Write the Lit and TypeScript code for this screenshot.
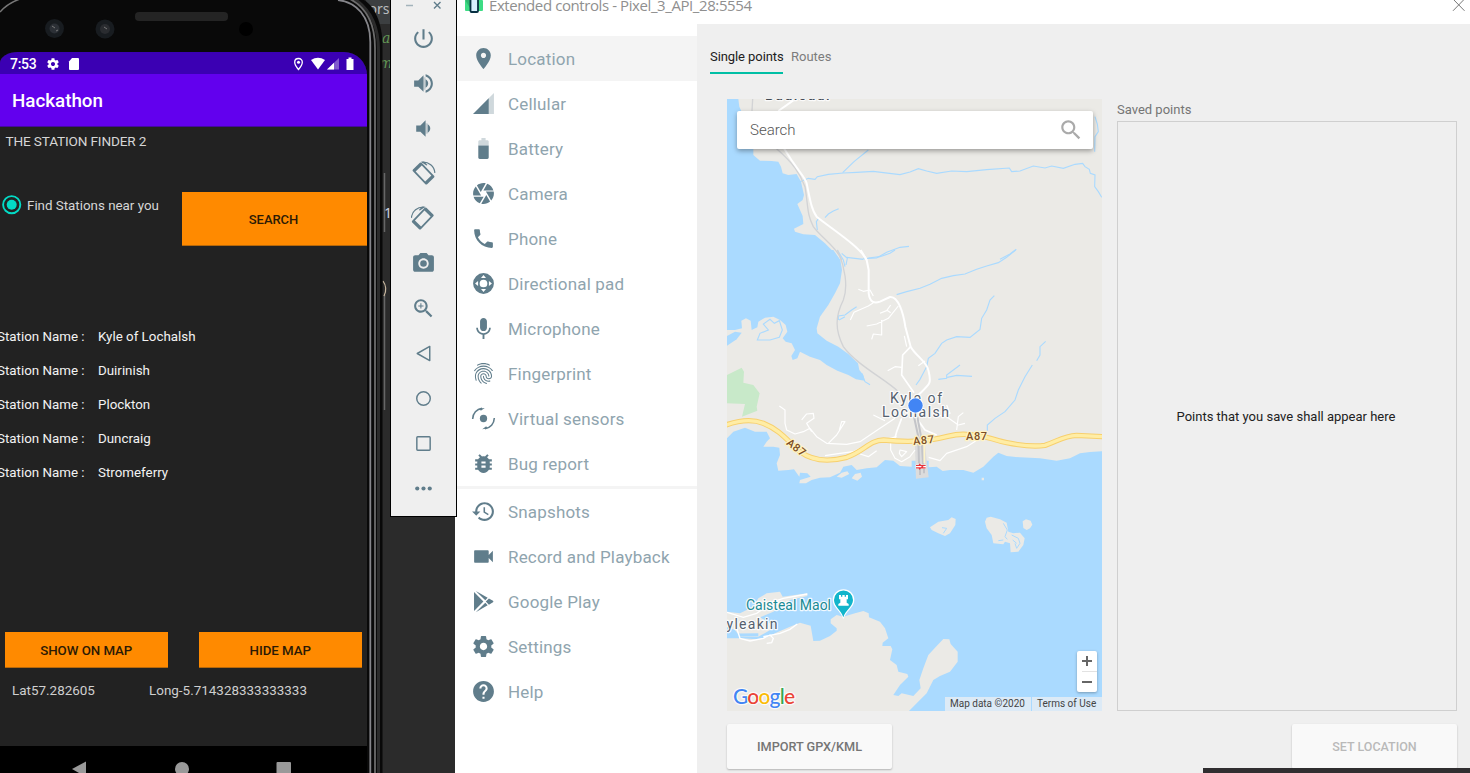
import { LitElement, html, css, svg } from "lit";
import { customElement } from "lit/decorators.js";

const ic = (body: unknown, size = 25, vb = "0 0 24 24") =>
  html`<svg width=${size} height=${size} viewBox=${vb} fill="currentColor">${body}</svg>`;
const p = (d: string) => svg`<path d=${d}></path>`;

const GEAR =
  "M19.43 12.98c.04-.32.07-.64.07-.98s-.03-.66-.07-.98l2.11-1.65c.19-.15.24-.42.12-.64l-2-3.46c-.12-.22-.39-.3-.61-.22l-2.49 1c-.52-.4-1.08-.73-1.69-.98l-.38-2.65C14.46 2.18 14.25 2 14 2h-4c-.25 0-.46.18-.49.42l-.38 2.65c-.61.25-1.17.59-1.69.98l-2.49-1c-.23-.09-.49 0-.61.22l-2 3.46c-.13.22-.07.49.12.64l2.11 1.65c-.04.32-.07.65-.07.98s.03.66.07.98l-2.11 1.65c-.19.15-.24.42-.12.64l2 3.46c.12.22.39.3.61.22l2.49-1c.52.4 1.08.73 1.69.98l.38 2.65c.03.24.24.42.49.42h4c.25 0 .46-.18.49-.42l.38-2.65c.61-.25 1.17-.59 1.69-.98l2.49 1c.23.09.49 0 .61-.22l2-3.46c.12-.22.07-.49-.12-.64l-2.11-1.65zM12 15.5c-1.93 0-3.5-1.57-3.5-3.5s1.57-3.5 3.5-3.5 3.5 1.57 3.5 3.5-1.57 3.5-3.5 3.5z";
const FINGER =
  "M17.81 4.47c-.08 0-.16-.02-.23-.06C15.66 3.42 14 3 12.01 3c-1.98 0-3.86.47-5.57 1.41-.24.13-.54.04-.68-.2-.13-.24-.04-.55.2-.68C7.82 2.52 9.86 2 12.01 2c2.13 0 3.99.47 6.03 1.52.25.13.34.43.21.67-.09.18-.26.28-.44.28zM3.5 9.72c-.1 0-.2-.03-.29-.09-.23-.16-.28-.47-.12-.7.99-1.4 2.25-2.5 3.75-3.27C9.98 4.04 14 4.03 17.15 5.65c1.5.77 2.76 1.86 3.75 3.25.16.22.11.54-.12.7-.23.16-.54.11-.7-.12-.9-1.26-2.04-2.25-3.39-2.94-2.87-1.47-6.54-1.47-9.4.01-1.36.7-2.5 1.7-3.4 2.96-.08.14-.23.21-.39.21zm6.25 12.07c-.13 0-.26-.05-.35-.15-.87-.87-1.34-1.43-2.01-2.64-.69-1.23-1.05-2.73-1.05-4.34 0-2.97 2.54-5.39 5.66-5.39s5.66 2.42 5.66 5.39c0 .28-.22.5-.5.5s-.5-.22-.5-.5c0-2.42-2.09-4.39-4.66-4.39-2.57 0-4.66 1.97-4.66 4.39 0 1.44.32 2.77.93 3.85.64 1.15 1.08 1.64 1.85 2.42.19.2.19.51 0 .71-.11.1-.24.15-.37.15zm7.17-1.85c-1.19 0-2.24-.3-3.1-.89-1.49-1.01-2.38-2.65-2.38-4.39 0-.28.22-.5.5-.5s.5.22.5.5c0 1.41.72 2.74 1.94 3.56.71.48 1.54.71 2.54.71.24 0 .64-.03 1.04-.1.27-.05.53.13.58.41.05.27-.13.53-.41.58-.57.11-1.07.12-1.21.12zM14.91 22c-.04 0-.09-.01-.13-.02-1.59-.44-2.63-1.03-3.72-2.1-1.4-1.39-2.17-3.24-2.17-5.22 0-1.62 1.38-2.94 3.08-2.94 1.7 0 3.08 1.32 3.08 2.94 0 1.07.93 1.94 2.08 1.94s2.08-.87 2.08-1.94c0-3.77-3.25-6.83-7.25-6.83-2.84 0-5.44 1.58-6.61 4.03-.39.81-.59 1.76-.59 2.8 0 .78.07 2.01.67 3.61.1.26-.03.55-.29.64-.26.1-.55-.04-.64-.29-.49-1.31-.73-2.61-.73-3.96 0-1.2.23-2.29.68-3.24 1.33-2.79 4.28-4.6 7.51-4.6 4.55 0 8.25 3.51 8.25 7.83 0 1.62-1.38 2.94-3.08 2.94s-3.08-1.32-3.08-2.94c0-1.07-.93-1.94-2.08-1.94s-2.08.87-2.08 1.94c0 1.71.66 3.31 1.87 4.51.95.94 1.86 1.46 3.27 1.85.27.07.42.35.35.61-.05.23-.26.38-.47.38z";

const MENU: [string, unknown][] = [
  ["Location", p("M12 2C8.13 2 5 5.13 5 9c0 5.25 7 13 7 13s7-7.75 7-13c0-3.87-3.13-7-7-7zm0 9.5c-1.38 0-2.5-1.12-2.5-2.5s1.12-2.5 2.5-2.5 2.5 1.12 2.5 2.5-1.12 2.5-2.5 2.5z")],
  ["Cellular", svg`<path fill-opacity=".3" d="M2 22h20V2z"></path><path d="M17 7L2 22h15z"></path>`],
  ["Battery", svg`<path fill-opacity=".3" d="M17 5.33C17 4.6 16.4 4 15.67 4H14V2h-4v2H8.33C7.6 4 7 4.6 7 5.33V9h10V5.33z"></path><path d="M7 9v11.67C7 21.4 7.6 22 8.33 22h7.33c.74 0 1.34-.6 1.34-1.33V9H7z"></path>`],
  ["Camera", p("M9.4 10.5l4.77-8.26C13.47 2.09 12.75 2 12 2c-2.4 0-4.6.85-6.32 2.25l3.66 6.35.06-.1zM21.54 9c-.92-2.92-3.15-5.26-6-6.34L11.88 9h9.66zm.26 1h-7.49l.29.5 4.76 8.25C21 16.97 22 14.61 22 12c0-.69-.07-1.35-.2-2zM8.54 12l-3.9-6.75C3.01 7.03 2 9.39 2 12c0 .69.07 1.35.2 2h7.49l-1.15-2zm-6.08 3c.92 2.92 3.15 5.26 6 6.34L12.12 15H2.46zm11.27 0l-3.9 6.76c.7.15 1.42.24 2.17.24 2.4 0 4.6-.85 6.32-2.25l-3.66-6.35-.93 1.6z")],
  ["Phone", p("M6.62 10.79c1.44 2.83 3.76 5.14 6.59 6.59l2.2-2.2c.27-.27.67-.36 1.02-.24 1.12.37 2.33.57 3.57.57.55 0 1 .45 1 1V20c0 .55-.45 1-1 1-9.39 0-17-7.61-17-17 0-.55.45-1 1-1h3.5c.55 0 1 .45 1 1 0 1.25.2 2.45.57 3.57.11.35.03.74-.25 1.02l-2.2 2.2z")],
  ["Directional pad", svg`<path fill-rule="evenodd" d="M12 2a10 10 0 1 0 0 20a10 10 0 1 0 0-20z M12 8.3a3.7 3.7 0 1 1 0 7.4a3.7 3.7 0 1 1 0-7.4z M12 3.9l2.4 2.9h-4.8z M12 20.1l2.4-2.9h-4.8z M3.9 12l2.9-2.4v4.8z M20.1 12l-2.9-2.4v4.8z"></path>`],
  ["Microphone", p("M12 14.5c1.86 0 3.3-1.4 3.3-3.3V5.2c0-1.8-1.5-3.3-3.3-3.3S8.7 3.4 8.7 5.2v6c0 1.9 1.5 3.3 3.3 3.3zm5.3-3.2c0 3-2.54 5.2-5.3 5.2s-5.3-2.2-5.3-5.2H5c0 3.41 2.72 6.23 6.1 6.72V22h1.8v-3.98c3.38-.48 6.1-3.3 6.1-6.72h-1.7z")],
  ["Fingerprint", p(FINGER)],
  ["Virtual sensors", svg`<circle cx="12" cy="12" r="3.5"></circle><path fill="none" stroke="currentColor" stroke-width="1.5" d="M1.6 12.4C1.8 7 5.4 3 10.6 2.3M22.4 11.6C22.2 17 18.6 21 13.4 21.7"></path><path d="M13.2 1.8L9.4 4.6 8.2 2.4z M10.8 22.2l3.8-2.8 1.2 2.2z"></path>`],
  ["Bug report", p("M20 8h-2.81c-.45-.78-1.07-1.45-1.82-1.96L17 4.41 15.59 3l-2.17 2.17C12.96 5.06 12.49 5 12 5c-.49 0-.96.06-1.41.17L8.41 3 7 4.41l1.62 1.63C7.88 6.55 7.26 7.22 6.81 8H4v2h2.09c-.05.33-.09.66-.09 1v1H4v2h2v1c0 .34.04.67.09 1H4v2h2.81c1.04 1.79 2.97 3 5.19 3s4.15-1.21 5.19-3H20v-2h-2.09c.05-.33.09-.66.09-1v-1h2v-2h-2v-1c0-.34-.04-.67-.09-1H20V8zm-6 8h-4v-2h4v2zm0-4h-4v-2h4v2z")],
];
const MENU2: [string, unknown][] = [
  ["Snapshots", p("M13 3c-4.97 0-9 4.03-9 9H1l3.89 3.89.07.14L9 12H6c0-3.87 3.13-7 7-7s7 3.13 7 7-3.13 7-7 7c-1.93 0-3.68-.79-4.94-2.06l-1.42 1.42C8.27 19.99 10.51 21 13 21c4.97 0 9-4.03 9-9s-4.03-9-9-9zm-1 5v5l4.28 2.54.72-1.21-3.5-2.08V8H12z")],
  ["Record and Playback", p("M17 10.5V7c0-.55-.45-1-1-1H4c-.55 0-1 .45-1 1v10c0 .55.45 1 1 1h12c.55 0 1-.45 1-1v-3.5l4 4v-11l-4 4z")],
  ["Google Play", p("M2.9 2.9L11.9 12 2.9 21.1z M4.6 1.8L16 8.5l-2.3 2.2z M4.6 22.2L16 15.5l-2.3-2.2z M17.2 9l3.9 2.3q.9.7 0 1.4L17.2 15l-3-3z")],
  ["Settings", p(GEAR)],
  ["Help", p("M12 2C6.48 2 2 6.48 2 12s4.48 10 10 10 10-4.48 10-10S17.52 2 12 2zm1 17h-2v-2h2v2zm2.07-7.75l-.9.92C13.45 12.9 13 13.5 13 15h-2v-.5c0-1.1.45-2.1 1.17-2.83l1.24-1.26c.37-.36.59-.86.59-1.41 0-1.1-.9-2-2-2s-2 .9-2 2H8c0-2.21 1.79-4 4-4s4 1.79 4 4c0 .88-.36 1.68-.93 2.25z")],
];

const rotate = svg`<g transform="translate(12 12)">
  <g transform="rotate(46)"><path fill-rule="evenodd" d="M-8.6 -5.8H8.6Q9.8 -5.8 9.8 -4.6V4.6Q9.8 5.8 8.6 5.8H-8.6Q-9.8 5.8 -9.8 4.6V-4.6Q-9.8 -5.8 -8.6 -5.8z M-6.6 -4.1V4.1H6.6V-4.1z"></path></g>
  <path fill="none" stroke="currentColor" stroke-width="1.2" d="M-1.6 -10.8C5 -11.4 10.4 -7 10.9 -.6"></path><path d="M-2.6 -11.4l3.4 0 3 3.2 -1 .4z"></path></g>`;

const TOOLS: unknown[] = [
  p("M13 3h-2v10h2V3zm4.83 2.17l-1.42 1.42C17.99 7.86 19 9.81 19 12c0 3.87-3.13 7-7 7s-7-3.13-7-7c0-2.19 1.01-4.14 2.58-5.42L6.17 5.17C4.23 6.82 3 9.26 3 12c0 4.97 4.03 9 9 9s9-4.03 9-9c0-2.74-1.23-5.18-3.17-6.83z"),
  svg`<path d="M3 9v6h4l5 5V4L7 9H3zM16.5 12c0-1.77-1.02-3.29-2.5-4.03v8.05c1.48-.73 2.5-2.25 2.5-4.02zM14 3.23v2.06c2.89.86 5 3.54 5 6.71s-2.11 5.85-5 6.71v2.06c4.01-.91 7-4.49 7-8.77s-2.99-7.86-7-8.77z"></path><path fill-opacity=".3" d="M12 6h2v12h-2z"></path>`,
  svg`<path d="M18.5 12c0-1.77-1.02-3.29-2.5-4.03v8.05c1.48-.73 2.5-2.25 2.5-4.02zM5 9v6h4l5 5V4L9 9H5z"></path><path fill-opacity=".3" d="M14 7h2v10h-2z"></path>`,
  rotate,
  svg`<g transform="matrix(-1 0 0 1 23.300 0)">${rotate}</g>`,
  p("M9 2L7.17 4H4c-1.1 0-2 .9-2 2v12c0 1.1.9 2 2 2h16c1.1 0 2-.9 2-2V6c0-1.1-.9-2-2-2h-3.17L15 2H9zm3 15c-2.76 0-5-2.24-5-5s2.24-5 5-5 5 2.24 5 5-2.24 5-5 5zM12 8.8a3.2 3.2 0 1 0 0 6.4a3.2 3.2 0 1 0 0-6.4z"),
  p("M15.5 14h-.79l-.28-.27C15.41 12.59 16 11.11 16 9.5 16 5.91 13.09 3 9.5 3S3 5.91 3 9.5 5.91 16 9.5 16c1.61 0 3.09-.59 4.23-1.57l.27.28v.79l5 4.99L20.49 19l-4.99-5zm-6 0C7.01 14 5 11.99 5 9.5S7.01 5 9.5 5 14 7.01 14 9.5 11.99 14 9.5 14zm2.5-4h-2v2H9v-2H7V9h2V7h1v2h2v1z"),
  svg`<path fill="none" stroke="currentColor" stroke-width="1.400" stroke-linejoin="round" d="M18 5.2v13.6L6 12z"></path>`,
  svg`<circle cx="12" cy="12" r="6.5" fill="none" stroke="currentColor" stroke-width="1.400"></circle>`,
  svg`<rect x="5.6" y="5.6" width="12.8" height="12.8" rx=".8" fill="none" stroke="currentColor" stroke-width="1.400"></rect>`,
  svg`<circle cx="6" cy="12" r="2"></circle><circle cx="12" cy="12" r="2"></circle><circle cx="18" cy="12" r="2"></circle>`,
];

const mapArt = svg`
  <rect x="727" y="99" width="375" height="612" fill="#ebeae6"></rect>
  <g transform="translate(700 0) scale(.33333)">
    <path fill="#aadaff" d="M81 297H115L118 320 125 335 150 400 160 447 160 465 180 482 215 483 235 485 243 500 248 520 265 525 290 522 303 545 312 585 308 600 292 612 300 630 308 648 310 672 282 686 285 695 310 703 345 705 375 730 405 760 421 782H81z"></path>
    <g fill="none" stroke="#aadaff" stroke-width="3.400">
      <path d="M300 545L325 535 345 538 352 530 385 523 430 519 470 517 520 514 550 518 600 524 630 516 655 506 680 513 710 520 755 513 800 515 860 509 928 504 935 515 960 513 1000 498 1035 504 1055 498 1090 505 1125 493 1148 490 1155 500 1168 508 1171 520 1185 525 1184 560 1195 575 1205 592"></path>
      <path d="M428 518L462 485 505 450M375 653L385 642 400 633 416 626M352 690L349 665 356 655M490 776L530 774 560 757 600 742 627 739M900 778L930 762 949 748"></path>
      <path d="M1185 350L1192 372 1195 395 1185 410 1184 455"></path>
    </g>
    <path fill="none" stroke="#d2d3d5" stroke-width="4" d="M158 297L156 333M228 445C280 490 300 520 315 560C325 620 320 640 340 680C360 710 410 740 425 780"></path>
    <path fill="none" stroke="#fff" stroke-width="6" d="M235 333L280 301M252 445C290 510 315 530 320 550C330 600 335 630 350 650C400 690 480 740 500 780"></path>
  </g>
  <g transform="translate(720 250) scale(.33333)">
    <path fill="#aadaff" d="M21 0H340L361 30 366 60 360 100 345 130 325 165 300 200 290 235 292 250 320 272 355 290 385 312 414 340 418 360 430 375 434 392 408 388 385 375 352 362 320 345 300 330 270 320 240 305 232 325 218 330 214 318 225 300 215 280 197 275 188 265 202 245 197 225 180 210 160 200 135 203 115 215 112 232 95 240 92 212 78 205 64 212 66 235 45 240H21z"></path>
    <path fill="#aadaff" d="M21 258L45 245 65 248 50 268 21 287z"></path>
    <path fill="#c8e9c9" d="M21 375L65 353 72 365 70 398 100 405 119 430 110 470 112 482 66 500 75 462 21 460z"></path>
    <path fill="#aadaff" d="M21 565L40 545 75 533 105 545 140 545 150 565 140 575 130 590 160 590 178 593 180 615 170 640 175 662 205 660 222 658 238 680 240 668 262 670 272 680 240 690 238 700 258 700 275 690 300 683 330 682 360 668 370 650 395 645 410 660 440 655 470 652 495 630 520 632 540 648 575 650V632H626V652L650 650 668 663 690 660 730 660 760 668 790 650 820 620 835 608 860 618 900 622 960 625 1010 632 1050 625 1080 610 1110 606 1147 604V1385H21z"></path>
    <path fill="#ebeae6" d="M395 685L405 672 422 668 426 680 412 692zM350 680L365 668 382 664 388 672 365 683zM785 683h7v8h-7z"></path>
    <path fill="#dcdcdc" d="M584 560H612L626 682 588 686z"></path>
    <g fill="none" stroke="#aadaff" stroke-width="3.4">
      <path d="M112 270L120 250 145 240 130 222 150 208 163 220 178 212 187 240 178 262 150 270zM425 370L435 395 450 404"></path>
      <path d="M352 0L370 30 375 50M365 10L382 25 378 45M380 22L430 28M445 24L480 20 510 10 525 0M355 210V198L375 195 395 180 410 170M357 210L375 200"></path>
      <path d="M530 134L560 125 600 115 630 103 665 85 700 77 735 72 770 58 800 48 835 38 860 22 887 0"></path>
      <path d="M588 405L600 388 620 350 625 325 645 310 665 280 680 270 710 260 750 262 780 238 785 205 800 180 810 150 823 137"></path>
      <path d="M950 332L960 315 960 290 977 274M802 545V525L825 505 855 485 885 450 895 420 915 380 937 345M655 388L680 385 680 375 720 345M682 382L710 376 756 379"></path>
    </g>
    <path fill="none" stroke="#d2d3d5" stroke-width="4" d="M352 0C375 50 385 110 370 150C345 200 345 240 370 290C410 345 500 390 535 425"></path>
    <g fill="none" stroke="#fff" stroke-width="3.5" stroke-linejoin="round">
      <path d="M415 118L430 124 450 120 460 138M460 158L445 168 402 187 391 210M440 228L470 222 505 205 535 168M480 190L500 182 512 165M500 180L512 188M485 210V255L460 252 455 268M553 258L560 290M503 362L525 350 545 352M595 347L615 333M178 468L195 480 195 520 200 540 225 552 250 545 270 535 290 560 320 580 380 583 420 575 480 535 525 505M245 510L260 492 280 490 282 505 260 520 275 545M325 580L350 555 375 515 365 515 358 540M315 617L360 610 400 605 450 580 530 560M460 495L495 512M420 612L445 620 470 602M512 565V600L525 625 545 635 570 620 585 600M540 600L560 605 545 620 538 610zM626 622L660 632 680 610 740 590 780 565M650 500L690 490 680 465M665 490L715 525 735 520M710 540L715 500 730 488"></path>
      <path stroke-width="5" d="M545 505L530 545 522 575M590 505L615 540 650 555"></path>
      <path stroke-width="6" d="M422 0L440 30 446 60V130C450 160 465 160 480 155L510 141C535 138 550 190 556 230L572 290C585 315 620 335 625 360C635 400 632 400 595 435"></path>
      <path stroke-width="5" d="M572 290L548 315 545 375 582 428"></path>
    </g>
    <path fill="none" stroke="#f7d06e" stroke-width="16" d="M15 526C60 510 100 508 130 520C180 540 200 570 240 605C280 635 330 635 380 622C430 605 450 570 490 570C540 575 600 575 640 568C690 560 700 550 740 553C800 555 810 568 860 578C910 588 950 590 975 586C1010 575 1030 558 1070 556L1150 560"></path>
    <path fill="none" stroke="#ffeda5" stroke-width="10" d="M15 526C60 510 100 508 130 520C180 540 200 570 240 605C280 635 330 635 380 622C430 605 450 570 490 570C540 575 600 575 640 568C690 560 700 550 740 553C800 555 810 568 860 578C910 588 950 590 975 586C1010 575 1030 558 1070 556L1150 560"></path>
    <path fill="none" stroke="#c3c4c8" stroke-width="6" d="M582 500L595 560 597 640M592 500L605 570 610 655M600 650V675M612 655V670"></path>
    <path fill="none" stroke="#fdf3c8" stroke-width="5" d="M613 585V640"></path>
    <path fill="none" stroke="#fff" stroke-width="12" d="M587 650H618"></path>
    <path fill="none" stroke="#e8343c" stroke-width="3.400" d="M588 646.500H617M588 653.500H617M597 642L608 650 597 658"></path>
  </g>
  <g transform="translate(720 480) scale(.33333)">
    <path fill="#ebeae6" d="M21 475L65 475 110 478 140 472 175 455 210 440 240 428 272 437 280 483 300 482 330 468 350 452 350 445 332 430 332 418 350 405 370 410 405 400 430 393 446 400 447 412 480 425 495 445 505 475 488 488 487 498 512 498 517 508 510 540 530 555 535 575 562 582 565 590 540 615 520 645 535 648 545 640 580 648 602 625 598 600 610 565 625 525 650 498 670 477 688 478 692 492 713 515 713 545 690 575 660 588 640 600 620 640 590 670 565 695H21z"></path>
    <path fill="#ebeae6" d="M21 395L60 400 100 380 115 355 140 340 180 335 188 350 262 340 262 348 210 360 190 375 160 395 120 412 150 430 160 445 115 470 60 470 45 450 21 440z"></path>
    <path fill="none" stroke="#aadaff" stroke-width="9" d="M21 464L60 465 115 464"></path>
    <path fill="none" stroke="#fff" stroke-width="4" d="M21 397L70 412 110 400 160 365 190 355 262 342M50 445L60 475 90 483 130 475 150 465 160 475 155 488 140 490M130 470L180 460 210 448 232 432"></path>
    <path fill="#ebeae6" d="M630 142L655 125 685 120 695 112 707 117 706 135 690 160 675 168 655 160 635 150zM795 125L800 113 812 110 840 118 860 128 865 155 880 160 900 158 914 175 910 195 895 215 872 217 870 190 855 185 850 193 820 190 815 165 800 145zM908 124L918 118 932 122 937 134 930 145 920 150 910 144z"></path>
    <path fill="none" stroke="#aadaff" stroke-width="3" d="M666 143L680 145 670 160M850 130L862 150 855 170 862 178M835 182L850 180M875 165L895 175 900 190 890 205 885 190M878 180L890 190"></path>
    <path fill="#fff" d="M370 418C362 392 338 382 338 360A32 32 0 0 1 403 360C403 382 378 392 370 418z"></path>
    <path fill="#12b5cb" d="M370 412C364 390 342 380 342 360A28.500 28.500 0 0 1 399 360C399 380 376 390 370 412z"></path>
    <path fill="#fff" d="M357 345H363V350H367V345H374V350H378V345H384V358H380V368L386 372V377H355V372L361 368V358H357z"></path>
  </g>
  <g class="lbl" font-family="Roboto, sans-serif">
    <text x="765" y="100" font-size="14" letter-spacing="1.500" fill="#444b55" font-weight="500">Badicaul</text>
    <text x="890" y="403" font-size="14" textLength="52" fill="#55606e">Kyle of</text>
    <text x="882" y="417" font-size="14" textLength="67" fill="#55606e">Lochalsh</text>
    <text x="726.500" y="629" font-size="14" textLength="51" fill="#55606e">yleakin</text>
    <text x="746" y="610" font-size="14" textLength="85" fill="#1a8a94">Caisteal Maol</text>
    <g font-size="11" font-weight="500" fill="#7d4e24" stroke="#fff3c4">
      <text x="913" y="444" textLength="21" transform="rotate(-6 923 440)">A87</text>
      <text x="966" y="439.500" textLength="21">A87</text>
      <text x="786" y="451" textLength="21" transform="rotate(38 796 447)">A87</text>
    </g>
  </g>
  <circle cx="915.500" cy="405.500" r="8" fill="#fff"></circle>
  <circle cx="915.500" cy="405.500" r="7.200" fill="#4285f4"></circle>
  <g class="logo" font-family="Lato, sans-serif"><text x="733" y="704" font-size="21" font-weight="500" textLength="62" stroke="#fff" stroke-width="2.500" stroke-opacity=".8"><tspan fill="#4285f4">G</tspan><tspan fill="#ea4335">o</tspan><tspan fill="#fbbc05">o</tspan><tspan fill="#4285f4">g</tspan><tspan fill="#34a853">l</tspan><tspan fill="#ea4335">e</tspan></text></g>
`;

@customElement("app-root")
export class AppRoot extends LitElement {
  static styles = css`
    :host { display: block; position: relative; width: 1470px; height: 773px; overflow: hidden; background: #2b2b2b; font-family: Roboto, sans-serif; }
    * { box-sizing: border-box; }
    svg { display: block; flex: none; }
    span, h4, b, .btn, .act { white-space: nowrap; }
    .desk, .phone, .tools, .ext, .dock { position: absolute; }
    .desk { left: 366px; top: 0; width: 89px; height: 773px; background: #2b2b2b; }
    .phone { left: 0; top: 0; width: 384px; height: 773px; display: flex; flex-direction: column; padding-top: 52px; overflow: hidden; }
    .frame { position: absolute; inset: 0; }
    .screen { position: relative; width: 367px; height: 721px; display: flex; flex-direction: column; background: #222; border-radius: 18px 23px 0 0 / 11px 23px 0 0; overflow: hidden; color: #d6d6d6; font-size: 13.35px; }
    .status { height: 22px; background: #3b00b3; display: flex; align-items: center; padding: 1px 12px 0 10px; color: #fff; }
    .clock { font-weight: 500; font-size: 14px; letter-spacing: -0.3px; width: 36px; }
    .sd { margin-left: 8px; }
    .grow { flex: 1; }
    .appbar { height: 53px; background: #6200ee; color: #fff; font-weight: 500; font-size: 18.8px; padding: 2px 12px 0; display: flex; align-items: center; border-bottom: 1px solid #4409a0; }
    .title { padding: 6px 0 0 5.5px; height: 65px; line-height: 16px; font-size: 13.6px; letter-spacing: -0.15px; }
    .find { display: flex; height: 54px; }
    .radio { display: flex; width: 182px; height: 26px; align-items: center; gap: 5px; padding-left: 2px; }
    .btn { background: #ff8a00; color: #2c1a05; font-weight: 500; font-size: 13.3px; letter-spacing: -0.05px; display: flex; align-items: center; justify-content: center; padding-top: 1px; border-bottom: 1px solid #b5680c; }
    .btn.find-btn { width: 185px; font-size: 13px; padding-right: 2px; }
    .list { padding-top: 74px; height: 386px; color: #f2f2f2; }
    .st { height: 34px; display: flex; line-height: 34px; margin-left: -3px; }
    .st span:first-child { width: 101px; }
    .pair { display: flex; gap: 31.5px; padding-left: 5px; height: 36px; }
    .pair .btn { width: 162.5px; }
    .coords { display: flex; padding: 15px 0 0 12px; height: 78px; line-height: 15px; font-size: 13.45px; color: #cfcfcf; }
    .coords span:first-child { width: 137px; }
    .nav { flex: 1; background: #000; }
    .tools { left: 390px; top: -2px; width: 67px; height: 519px; background: #efefef; border: 1.5px solid #000; border-right-width: 1px; display: flex; flex-direction: column; align-items: center; color: #607d8b; }
    .wc { height: 17px; width: 100%; display: flex; padding: 2px 0 0 14.5px; flex: none; }
    .tool { height: 45px; display: flex; align-items: center; flex: none; padding-right: 1px; }
    .ext { left: 455px; top: 0; width: 1015px; height: 773px; background: #fff; display: flex; flex-direction: column; }
    .bar { height: 24px; display: flex; padding-left: 10px; padding-right: 5px; overflow: hidden; }
    .bar b { font: 400 15px/20px "Open Sans", sans-serif; color: #8f8f8f; margin: -5px 0 0 6px; letter-spacing: -0.41px; }
    .body { display: flex; flex: 1; }
    .side { width: 242px; padding-top: 12px; color: #607d8b; }
    .row { height: 45px; display: flex; align-items: center; padding-left: 16px; gap: 12px; }
    .row span { font-size: 17px; color: #8fa4ae; letter-spacing: 0.18px; padding-top: 1px; }
    .on { background: #f4f4f4; }
    .sep { height: 3px; background: #f4f4f4; }
    .main { flex: 1; background: #efefef; display: flex; flex-direction: column; }
    .tabs { display: flex; gap: 8px; padding: 22px 0 0 13px; height: 75px; font-size: 13px; color: #7c7c7c; }
    .tabs span { height: 28px; line-height: 22px; }
    .tabs .sel { color: #212121; border-bottom: 2px solid #00bfa5; width: 73px; letter-spacing: -0.08px; }
    .cols { display: flex; height: 612px; padding-left: 30px; gap: 15px; }
    .map { width: 375px; height: 612px; position: relative; }
    .lbl text { paint-order: stroke; stroke-width: 2.5px; stroke-linejoin: round; }
    .lbl > text { stroke: rgba(255, 255, 255, 0.85); }
    .logo text { paint-order: stroke; stroke-linejoin: round; }
    .search { position: absolute; left: 10px; top: 12px; width: 356px; height: 38px; background: #fff; border-radius: 2px; box-shadow: 0 2px 5px rgba(0, 0, 0, 0.35); display: flex; align-items: center; justify-content: space-between; padding: 0 9px 0 13px; font-size: 15px; font-weight: 300; color: #555; }
    .zoomer { position: absolute; left: 350px; top: 552px; width: 20px; height: 41px; background: #fff; border-radius: 2px; box-shadow: 0 1px 3px rgba(0, 0, 0, 0.3); }
    .attr { position: absolute; right: 0; bottom: 0; display: flex; height: 14px; font-size: 10px; line-height: 14px; color: #444; }
    .attr span { background: #dceaf6; }
    .attr span:first-child { width: 86px; padding-left: 5px; margin-right: 1px; }
    .attr span:last-child { width: 70px; padding-left: 5px; }
    .saved { width: 340px; display: flex; flex-direction: column; font-size: 13px; color: #757575; }
    .saved h4 { margin: 0; font: inherit; height: 22px; line-height: 21px; }
    .box { flex: 1; border: 1px solid #cfcfcf; display: flex; align-items: center; justify-content: center; color: #212121; font-size: 13px; padding-right: 2px; }
    .acts { display: flex; justify-content: space-between; padding: 13px 13px 0 30px; }
    .act { width: 165px; height: 45px; background: #f9f9f9; border-radius: 2px; box-shadow: 0 1px 2px rgba(0, 0, 0, 0.25); font-size: 12.7px; font-weight: 500; color: #757575; display: flex; align-items: center; justify-content: center; }
    .dis { color: #b9b9b9; font-size: 12.5px; }
    .dock { left: 1203px; top: 768px; width: 267px; height: 5px; background: #302e30; }
  `;

  render() {
    return html`
      <div class="desk">
        <svg width="89" height="773" viewBox="366 0 89 773">
          <rect x="366" width="89" height="24" fill="#3c3f41"></rect>
          <g font-family="Noto Sans, sans-serif" font-size="14"><text x="368.500" y="14" fill="#b9bcbf">ors</text>
          <g font-family="DejaVu Serif, serif" font-style="italic" fill="#629755"><text x="382" y="43">a</text><text x="379" y="68">m</text></g>
          <text x="384" y="218" fill="#c8d0e0">1</text></g>
          <path d="M384.500 173V232M384.500 295V410" stroke="#666" stroke-width="1.500"></path>
          <path d="M383 281Q388 288 384 296" fill="none" stroke="#c9b8a0" stroke-width="1.200"></path>
        </svg>
      </div>
      <section class="phone">
        <svg class="frame" width="384" height="773" viewBox="0 0 384 773">
          <path d="M0 0H364C374 6 382.500 22 382.500 46V773H0z" fill="#090909"></path>
          <path d="M353 -2C369 8 378.500 24 378.500 50V773" fill="none" stroke="#2b2b2b" stroke-width="3"></path>
          <path d="M348 -2C365 6 375 22 375 48V773" fill="none" stroke="#6c6c6c" stroke-width="1.800"></path>
          <path d="M338 0C356 2 370.300 16 370.300 42V773" fill="none" stroke="#85858a" stroke-width="1.800"></path>
          <path d="M0 12Q8 3 20 -1" fill="none" stroke="#777" stroke-width="1.500"></path>
          <rect x="135" y="12" width="93" height="9" rx="4" fill="#242424"></rect>
          <circle cx="54.500" cy="28.500" r="9.500" fill="#181c20"></circle><circle cx="54.500" cy="28.500" r="5" fill="#2c3036"></circle>
          <circle cx="105" cy="29" r="9.500" fill="#181c20"></circle><circle cx="105" cy="29" r="5" fill="#2a2c30"></circle>
          <path d="M52 26l3 2M56 31l2-1M104 27l3 2" stroke="#777" stroke-width="1"></path>
          <circle cx="246" cy="29" r="7" fill="#000"></circle>
        </svg>
        <div class="screen">
          <div class="status">
            <span class="clock">7:53</span>
            ${ic(p(GEAR), 14)}
            <svg class="sd" width="12" height="14" viewBox="0 0 12 14" fill="#fff"><path d="M4 1H10Q11 1 11 2V12Q11 13 10 13H2Q1 13 1 12V4.500z"></path></svg>
            <span class="grow"></span>
            <svg width="62" height="14" viewBox="0 0 62 14" fill="#fff">
              <path d="M5.500 1.500C3 1.500 1.700 3.200 1.700 5.200C1.700 8 5.500 12.500 5.500 12.500S9.300 8 9.300 5.200C9.300 3.200 8 1.500 5.500 1.500z" fill="none" stroke="#fff" stroke-width="1.300"></path><circle cx="5.500" cy="5.300" r="1.500"></circle>
              <path d="M18 3Q25 -1.500 32 3L25 12.500z"></path>
              <path d="M34 12.500L46 1V12.500z" opacity=".35"></path><path d="M34 12.500L41 5.800V12.500z"></path>
              <path d="M53.500 2H55.500V.5H58.500V2H60.500V13H53.500z"></path>
            </svg>
          </div>
          <div class="appbar">Hackathon</div>
          <div class="title">THE STATION FINDER 2</div>
          <div class="find">
            <div class="radio"><svg width="20" height="20" viewBox="0 0 20 20"><circle cx="9.700" cy="9.700" r="8.600" fill="none" stroke="#03dac5" stroke-width="1.900"></circle><circle cx="9.700" cy="9.700" r="5" fill="#03dac5"></circle></svg><span>Find Stations near you</span></div>
            <div class="btn find-btn">SEARCH</div>
          </div>
          <div class="list">
            ${["Kyle of Lochalsh", "Duirinish", "Plockton", "Duncraig", "Stromeferry"].map(
              (n) => html`<div class="st"><span>Station Name :</span><span>${n}</span></div>`
            )}
          </div>
          <div class="pair"><div class="btn">SHOW ON MAP</div><div class="btn">HIDE MAP</div></div>
          <div class="coords"><span>Lat57.282605</span><span>Long-5.714328333333333</span></div>
          <div class="nav"><svg width="367" height="27" viewBox="0 746 367 27" fill="#999"><path d="M72 769L86 761.500V777z"></path><circle cx="182" cy="769" r="7"></circle><rect x="276.500" y="762" width="14.500" height="14" rx="1"></rect></svg></div>
        </div>
      </section>
      <section class="ext">
        <header class="bar">
          <svg width="18" height="14" viewBox="0 0 18 14"><rect width="18" height="11" y="0" rx="1" fill="#3ddc84"></rect><path d="M0 0H5V8z" fill="#30b870"></path><rect x="5.500" y="-3" width="7.500" height="15" rx="1" fill="#d7effe" stroke="#073042" stroke-width="1.800"></rect></svg>
          <b>Extended controls - Pixel_3_API_28:5554</b><span class="grow"></span>
          <svg width="13" height="12" viewBox="0 0 13 12"><path d="M1 -1L12.500 10.800M12.500 -1L1 10.800" stroke="#777" stroke-width="1"></path></svg>
        </header>
        <div class="body">
          <nav class="side">
            ${MENU.map(([t, i], n) => html`<div class="row ${n === 0 ? "on" : ""}">${ic(i)}<span>${t}</span></div>`)}
            <div class="sep"></div>
            ${MENU2.map(([t, i]) => html`<div class="row">${ic(i)}<span>${t}</span></div>`)}
          </nav>
          <main class="main">
            <div class="tabs"><span class="sel">Single points</span><span>Routes</span></div>
            <div class="cols">
              <div class="map">
                <svg width="375" height="612" viewBox="727 99 375 612">${mapArt}</svg>
                <div class="search">Search<svg width="26" height="26" viewBox="0 0 24 24" fill="#aaa"><path d="M15.500 14h-.79l-.28-.27C15.410 12.590 16 11.110 16 9.500 16 5.910 13.090 3 9.500 3S3 5.910 3 9.500 5.910 16 9.500 16c1.610 0 3.090-.59 4.230-1.570l.27.28v.79l5 4.990L20.490 19l-4.990-5zm-6 0C7.010 14 5 11.990 5 9.500S7.010 5 9.500 5 14 7.010 14 9.500 11.990 14 9.500 14z"></path></svg></div>
                <div class="zoomer"><svg width="20" height="41" viewBox="0 0 20 41"><path d="M5 10H15M10 5V15M5 31H15" stroke="#666" stroke-width="2"></path><path d="M5 20.500H20" stroke="#e2e2e2"></path></svg></div>
                <div class="attr"><span>Map data ©2020</span><span>Terms of Use</span></div>
              </div>
              <div class="saved"><h4>Saved points</h4><div class="box">Points that you save shall appear here</div></div>
            </div>
            <div class="acts"><div class="act">IMPORT GPX/KML</div><div class="act dis">SET LOCATION</div></div>
          </main>
        </div>
      </section>
      <section class="tools">
        <div class="wc"><svg width="54" height="12" viewBox="0 0 54 12"><path d="M0 4.500H7" stroke="#a3b3bb" stroke-width="1.500"></path><path d="M28 1L34.500 7.500M34.500 1L28 7.500" stroke="#607d8b" stroke-width="1.400"></path></svg></div>
        ${TOOLS.map((t) => html`<div class="tool">${ic(t)}</div>`)}
      </section>
      <div class="dock"></div>
    `;
  }
}
